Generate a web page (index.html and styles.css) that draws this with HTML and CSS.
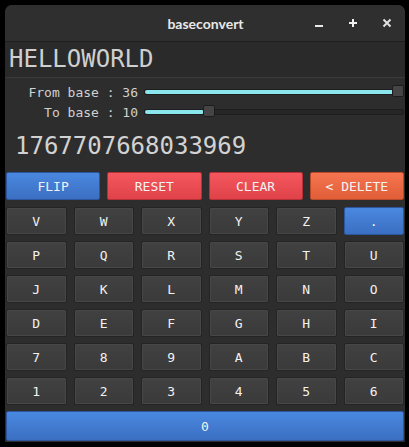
FILE: index.html
```html
<!DOCTYPE html>
<html>
<head>
<meta charset="utf-8">
<link rel="stylesheet" href="styles.css">
</head>
<body>
<div class="window">
  <div class="titlebar">
    <span class="title">baseconvert</span>
    <div class="controls">
      <svg class="ctl" width="12" height="12" viewBox="0 0 12 12"><rect x="2" y="8" width="8" height="2" fill="#e8e8e8"/></svg>
      <svg class="ctl" width="12" height="12" viewBox="0 0 12 12"><rect x="2" y="5" width="8" height="2" fill="#f0f0f0"/><rect x="5" y="2" width="2" height="8" fill="#f0f0f0"/></svg>
      <svg class="ctl" width="12" height="12" viewBox="0 0 12 12"><path d="M2.5 2.5 L9.5 9.5 M9.5 2.5 L2.5 9.5" stroke="#e0e0e0" stroke-width="2"/></svg>
    </div>
  </div>
  <div class="entry">HELLOWORLD</div>
  <div class="sliders">
    <div class="srow">
      <span class="slabel">From base : 36</span>
      <div class="track"><div class="fill" style="width:100%"></div><div class="thumb" style="left:calc(100% - 11px)"></div></div>
    </div>
    <div class="srow">
      <span class="slabel">To base : 10</span>
      <div class="track"><div class="fill" style="width:23%"></div><div class="thumb" style="left:58px"></div></div>
    </div>
  </div>
  <div class="output">1767707668033969</div>
  <div class="actions">
    <div class="btn blue">FLIP</div>
    <div class="btn red">RESET</div>
    <div class="btn red">CLEAR</div>
    <div class="btn orange">&lt; DELETE</div>
  </div>
  <div class="keys">
    <div class="key">V</div><div class="key">W</div><div class="key">X</div><div class="key">Y</div><div class="key">Z</div><div class="key blue">.</div>
    <div class="key">P</div><div class="key">Q</div><div class="key">R</div><div class="key">S</div><div class="key">T</div><div class="key">U</div>
    <div class="key">J</div><div class="key">K</div><div class="key">L</div><div class="key">M</div><div class="key">N</div><div class="key">O</div>
    <div class="key">D</div><div class="key">E</div><div class="key">F</div><div class="key">G</div><div class="key">H</div><div class="key">I</div>
    <div class="key">7</div><div class="key">8</div><div class="key">9</div><div class="key">A</div><div class="key">B</div><div class="key">C</div>
    <div class="key">1</div><div class="key">2</div><div class="key">3</div><div class="key">4</div><div class="key">5</div><div class="key">6</div>
  </div>
  <div class="zero">0</div>
</div>
</body>
</html>
```
FILE: styles.css
```css
html, body {
  margin: 0;
  padding: 0;
  background: #000;
  width: 409px;
  height: 447px;
  overflow: hidden;
}
.window {
  margin: 5px 0 0 5px;
  width: 400px;
  height: 437px;
  background: #2d2d2d;
  border-radius: 7px 7px 0 0;
  box-sizing: border-box;
  display: flex;
  flex-direction: column;
  font-family: "DejaVu Sans Mono", monospace;
  color: #e6e6e6;
}
.titlebar {
  height: 36px;
  flex: none;
  background: #2f2f2f;
  border-bottom: 1px solid #1f1f1f;
  border-radius: 7px 7px 0 0;
  display: flex;
  align-items: center;
  justify-content: center;
  position: relative;
}
.title {
  font-family: "Lato", "Noto Sans", sans-serif;
  font-weight: bold;
  font-size: 14px;
  color: #e8e8e8;
  margin-left: 1px;
}
.controls {
  position: absolute;
  right: 12px;
  top: 12px;
  display: flex;
  gap: 22px;
}
.ctl { display: block; }
.entry {
  height: 35px;
  flex: none;
  background: #2a2a2a;
  border-bottom: 1px solid #3a3a3a;
  font-size: 24px;
  line-height: 35px;
  padding-left: 4px;
  color: #cfcfcf;
}
.sliders {
  display: flex;
  flex-direction: column;
  gap: 6px;
  padding-top: 7px;
}
.srow {
  display: flex;
  align-items: center;
  height: 14px;
}
.slabel {
  width: 133px;
  text-align: right;
  font-size: 13px;
  color: #d0d0d0;
  flex: none;
}
.track {
  position: relative;
  margin-left: 6px;
  flex: 1;
  height: 4px;
  background: #262626;
  border: 1px solid #1e1e1e;
  border-radius: 2px;
  margin-right: 1px;
}
.fill {
  position: absolute;
  left: 0;
  top: 0;
  height: 4px;
  background: #8ae6ec;
  border-radius: 2px;
}
.thumb {
  position: absolute;
  top: -5px;
  width: 10px;
  height: 10px;
  background: #454545;
  border: 1px solid #1c1c1c;
  border-radius: 2px;
}
.output {
  font-size: 24px;
  color: #d2d2d2;
  padding-left: 10px;
  height: 28px;
  line-height: 28px;
  margin-top: 13px;
}
.actions {
  display: grid;
  grid-template-columns: repeat(4, 1fr);
  gap: 7px;
  padding: 0 1px;
  margin-top: 12px;
}
.btn, .key, .zero {
  display: flex;
  align-items: center;
  justify-content: center;
  font-size: 13px;
  box-sizing: border-box;
  border-radius: 2px;
  color: #f2f2f2;
}
.btn { height: 28px; }
.blue {
  background: linear-gradient(#4a88e0, #3b6fc2);
  border: 1px solid #2c56a0;
}
.red {
  background: linear-gradient(#f4575e, #e0424a);
  border: 1px solid #b83036;
}
.orange {
  background: linear-gradient(#f47550, #e05e38);
  border: 1px solid #b84a2a;
}
.keys {
  display: grid;
  grid-template-columns: repeat(6, 1fr);
  grid-auto-rows: 28px;
  column-gap: 7px;
  row-gap: 6px;
  padding: 0 1px;
  margin-top: 7px;
}
.key {
  background: linear-gradient(#414141, #3a3a3a);
  border: 1px solid #242424;
  box-shadow: inset 0 0 0 1px #474747;
}
.key.blue {
  background: linear-gradient(#4a88e0, #3b6fc2);
  border: 1px solid #2c56a0;
  box-shadow: none;
}
.zero {
  margin: 6px 1px 1px 1px;
  height: 32px;
  background: linear-gradient(#4a88e0, #3b6fc2);
  border: 1px solid #2c56a0;
}
```
